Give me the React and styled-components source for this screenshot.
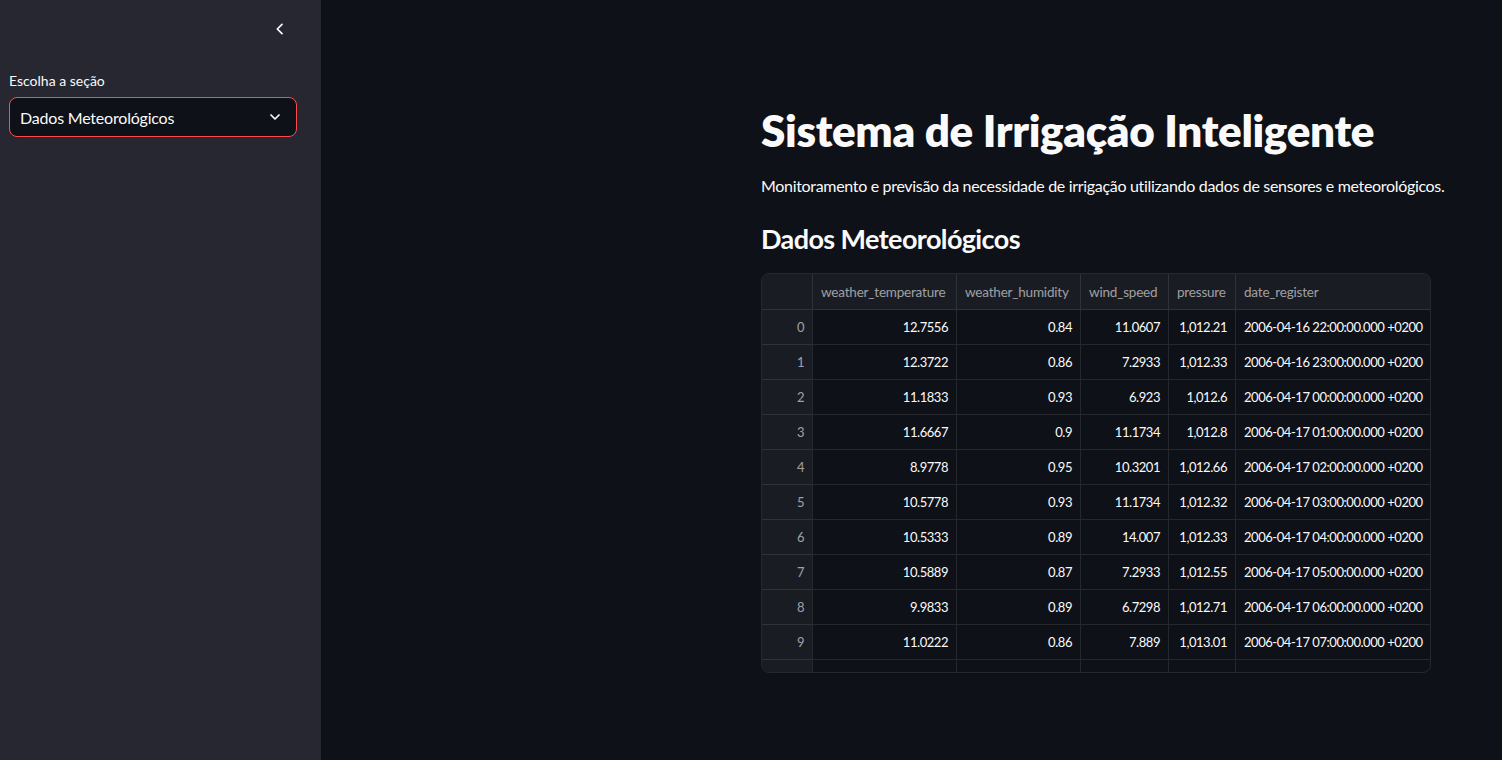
import React from "react";
import styled, { createGlobalStyle } from "styled-components";

const GlobalStyle = createGlobalStyle`
  html, body {
    margin: 0;
    padding: 0;
    background: #0e1117;
  }
  body {
    font-family: "Source Sans Pro", Lato, "Noto Sans", sans-serif;
    color: #fafafa;
  }
  * {
    box-sizing: border-box;
  }
`;

const columns = [
  { key: "weather_temperature", width: 144 },
  { key: "weather_humidity", width: 124 },
  { key: "wind_speed", width: 88 },
  { key: "pressure", width: 67 },
  { key: "date_register", width: 195, left: true },
];

const rows = [
  ["12.7556", "0.84", "11.0607", "1,012.21", "2006-04-16 22:00:00.000 +0200"],
  ["12.3722", "0.86", "7.2933", "1,012.33", "2006-04-16 23:00:00.000 +0200"],
  ["11.1833", "0.93", "6.923", "1,012.6", "2006-04-17 00:00:00.000 +0200"],
  ["11.6667", "0.9", "11.1734", "1,012.8", "2006-04-17 01:00:00.000 +0200"],
  ["8.9778", "0.95", "10.3201", "1,012.66", "2006-04-17 02:00:00.000 +0200"],
  ["10.5778", "0.93", "11.1734", "1,012.32", "2006-04-17 03:00:00.000 +0200"],
  ["10.5333", "0.89", "14.007", "1,012.33", "2006-04-17 04:00:00.000 +0200"],
  ["10.5889", "0.87", "7.2933", "1,012.55", "2006-04-17 05:00:00.000 +0200"],
  ["9.9833", "0.89", "6.7298", "1,012.71", "2006-04-17 06:00:00.000 +0200"],
  ["11.0222", "0.86", "7.889", "1,013.01", "2006-04-17 07:00:00.000 +0200"],
];

const gridCols = `50px ${columns.map((c) => c.width + "px").join(" ")}`;

const App = () => {
  return (
    <>
      <GlobalStyle />
      <Layout>
        <Sidebar>
          <CollapseRow>
            <CollapseButton>
              <svg width="16" height="16" viewBox="0 0 24 24" fill="none">
                <path
                  d="M15 5l-7 7 7 7"
                  stroke="#fafafa"
                  strokeWidth="2.6"
                  strokeLinecap="round"
                  strokeLinejoin="round"
                />
              </svg>
            </CollapseButton>
          </CollapseRow>
          <Label>Escolha a seção</Label>
          <Select>
            <span>Dados Meteorológicos</span>
            <svg width="16" height="16" viewBox="0 0 24 24" fill="none">
              <path
                d="M6 9l6 6 6-6"
                stroke="#fafafa"
                strokeWidth="2.6"
                strokeLinecap="round"
                strokeLinejoin="round"
              />
            </svg>
          </Select>
        </Sidebar>
        <Main>
          <Content>
            <Title>Sistema de Irrigação Inteligente</Title>
            <Subtitle>
              Monitoramento e previsão da necessidade de irrigação utilizando
              dados de sensores e meteorológicos.
            </Subtitle>
            <Heading>Dados Meteorológicos</Heading>
            <Frame>
              <Grid>
                <HeadCell $index />
                {columns.map((c) => (
                  <HeadCell key={c.key}>{c.key}</HeadCell>
                ))}
                {rows.map((r, i) => (
                  <React.Fragment key={i}>
                    <IndexCell>{i}</IndexCell>
                    {r.map((v, j) => (
                      <Cell key={j} $left={columns[j].left}>
                        {v}
                      </Cell>
                    ))}
                  </React.Fragment>
                ))}
                <IndexCell />
                {columns.map((c) => (
                  <Cell key={c.key} />
                ))}
              </Grid>
            </Frame>
          </Content>
        </Main>
      </Layout>
    </>
  );
};

const Layout = styled.div`
  display: flex;
  width: 100%;
  height: 760px;
  overflow: hidden;
`;

const Sidebar = styled.aside`
  width: 321px;
  flex: 0 0 321px;
  background: #262730;
  padding: 16px 24px 0 9px;
`;

const CollapseRow = styled.div`
  display: flex;
  justify-content: flex-end;
  height: 26px;
  margin-bottom: 30px;
`;

const CollapseButton = styled.div`
  width: 26px;
  height: 26px;
  display: flex;
  align-items: center;
  justify-content: center;
  margin-right: 4px;
`;

const Label = styled.div`
  font-size: 14px;
  line-height: 18px;
  margin-bottom: 7px;
  color: #fafafa;
`;

const Select = styled.div`
  height: 40px;
  border: 1px solid #ff4b4b;
  border-radius: 8px;
  background: #0e1117;
  display: flex;
  align-items: center;
  justify-content: space-between;
  padding: 0 13px 0 10px;
  font-size: 16px;
  letter-spacing: -0.2px;
`;

const Main = styled.main`
  flex: 1;
  background: #0e1117;
`;

const Content = styled.div`
  width: 704px;
  margin-left: 440px;
  padding-top: 102px;
`;

const Title = styled.h1`
  margin: 0;
  font-size: 44px;
  font-weight: 800;
  line-height: 56px;
  letter-spacing: -0.35px;
`;

const Subtitle = styled.p`
  margin: 16px 0 0;
  font-size: 16px;
  line-height: 24px;
  letter-spacing: -0.32px;
  white-space: nowrap;
`;

const Heading = styled.h2`
  margin: 22px 0 0;
  font-size: 27px;
  font-weight: 700;
  line-height: 38px;
  letter-spacing: -0.6px;
`;

const Frame = styled.div`
  margin-top: 15px;
  width: 670px;
  height: 400px;
  border: 1px solid rgba(250, 250, 250, 0.1);
  border-radius: 8px;
  overflow: hidden;
`;

const Grid = styled.div`
  display: grid;
  grid-template-columns: ${gridCols};
  grid-template-rows: 36px;
  grid-auto-rows: 35px;
  font-size: 13px;
  letter-spacing: -0.45px;
`;

const HeadCell = styled.div`
  background: #1a1c24;
  color: rgba(250, 250, 250, 0.6);
  display: flex;
  align-items: center;
  padding: 0 8px;
  border-bottom: 1px solid rgba(250, 250, 250, 0.1);
  border-left: ${(p) => (p.$index ? "none" : "1px solid rgba(250, 250, 250, 0.1)")};
  white-space: nowrap;
  font-size: 13.5px;
  letter-spacing: -0.2px;
`;

const IndexCell = styled.div`
  background: #1a1c24;
  color: rgba(250, 250, 250, 0.6);
  display: flex;
  align-items: center;
  justify-content: flex-end;
  padding: 0 8px;
  border-bottom: 1px solid rgba(250, 250, 250, 0.1);
`;

const Cell = styled.div`
  display: flex;
  align-items: center;
  justify-content: ${(p) => (p.$left ? "flex-start" : "flex-end")};
  padding: 0 8px;
  border-left: 1px solid rgba(250, 250, 250, 0.1);
  border-bottom: 1px solid rgba(250, 250, 250, 0.1);
  white-space: nowrap;
  color: #fafafa;
`;

export default App;
